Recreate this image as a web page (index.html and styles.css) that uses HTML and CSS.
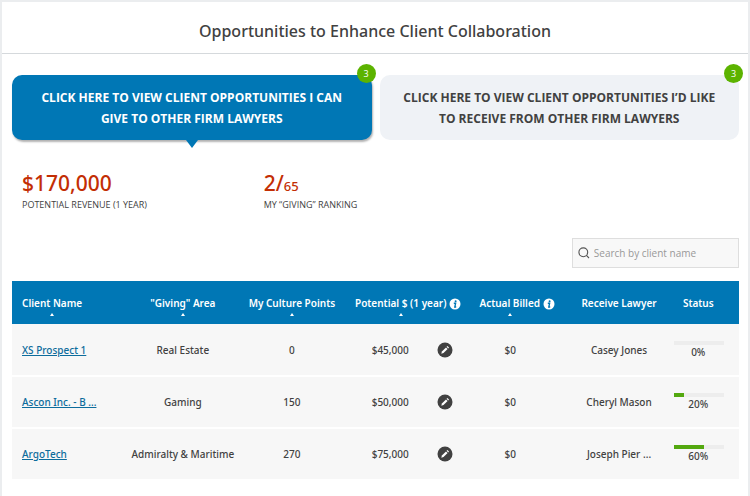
FILE: index.html
```html
<!DOCTYPE html>
<html lang="en">
<head>
    <meta charset="UTF-8">
    <meta name="viewport" content="width=device-width, initial-scale=1.0">
    <title>Client Collaboration</title>
    <link rel="stylesheet" href="styles.css">
</head>
<body>
    <!--shared icons-->
    <svg class="icon-defs" aria-hidden="true">
        <symbol id="info" viewBox="0 0 12 12">
            <circle cx="6" cy="6" r="5.5" fill="#fff"/>
            <circle cx="6.6" cy="3.2" r="1" fill="#0077b5"/>
            <path d="M4.8 5.3H6.6L5.8 9H7.2" fill="none" stroke="#0077b5" stroke-width="1.4"/>
        </symbol>
        <symbol id="edit" viewBox="0 0 16 16">
            <circle cx="8" cy="8" r="7.5" fill="#414141"/>
            <path d="M4.3 11.7L4.9 9.5L9 5.4L10.6 7L6.5 11.1Z" fill="#fff"/>
            <path d="M9.6 4.8L10.4 4L12 5.6L11.2 6.4Z" fill="#fff"/>
        </symbol>
    </svg>

    <main class="card">
        <h1>Opportunities to Enhance Client Collaboration</h1>
        <div class="content">
            <div class="tabs">
                <button type="button" class="tab active">Click here to view client opportunities I can give to other firm lawyers<span class="badge">3</span></button>
                <button type="button" class="tab">Click here to view client opportunities I’d like to receive from other firm lawyers<span class="badge">3</span></button>
            </div>

            <div class="stats">
                <div class="stat">
                    <div class="stat-value">$170,000</div>
                    <div class="stat-label">Potential revenue (1 year)</div>
                </div>
                <div class="stat">
                    <div class="stat-value">2/<small>65</small></div>
                    <div class="stat-label">My “giving” ranking</div>
                </div>
            </div>

            <label class="search">
                <svg viewBox="0 0 12 12" width="12" height="12" aria-hidden="true">
                    <circle cx="5.3" cy="5.3" r="4.4" fill="none" stroke="#555" stroke-width="1.1"/>
                    <path d="M8.4 8.4L11 11" stroke="#555" stroke-width="1.1"/>
                </svg>
                <input type="text" placeholder="Search by client name" aria-label="Search by client name">
            </label>

            <table class="clients">
                <thead>
                    <tr>
                        <th class="col-client"><span class="sort">Client Name</span></th>
                        <th class="col-area"><span class="sort">"Giving" Area</span></th>
                        <th class="col-points"><span class="sort">My Culture Points</span></th>
                        <th class="col-potential"><span class="sort">Potential $ (1 year)</span><svg class="info"><use href="#info"/></svg></th>
                        <th class="col-billed"><span class="sort">Actual Billed</span><svg class="info"><use href="#info"/></svg></th>
                        <th class="col-lawyer">Receive Lawyer</th>
                        <th class="col-status">Status</th>
                    </tr>
                </thead>
                <tbody>
                    <tr>
                        <td class="col-client"><a href="#">XS Prospect 1</a></td>
                        <td>Real Estate</td>
                        <td>0</td>
                        <td><div class="potential">$45,000<button type="button" class="edit" aria-label="Edit"><svg><use href="#edit"/></svg></button></div></td>
                        <td class="billed">$0</td>
                        <td>Casey Jones</td>
                        <td class="col-status"><div class="bar"><div class="fill" style="width: 0%"></div></div>0%</td>
                    </tr>
                    <tr>
                        <td class="col-client"><a href="#">Ascon Inc. - B ...</a></td>
                        <td>Gaming</td>
                        <td>150</td>
                        <td><div class="potential">$50,000<button type="button" class="edit" aria-label="Edit"><svg><use href="#edit"/></svg></button></div></td>
                        <td class="billed">$0</td>
                        <td>Cheryl Mason</td>
                        <td class="col-status"><div class="bar"><div class="fill" style="width: 20%"></div></div>20%</td>
                    </tr>
                    <tr>
                        <td class="col-client"><a href="#">ArgoTech</a></td>
                        <td>Admiralty &amp; Maritime</td>
                        <td>270</td>
                        <td><div class="potential">$75,000<button type="button" class="edit" aria-label="Edit"><svg><use href="#edit"/></svg></button></div></td>
                        <td class="billed">$0</td>
                        <td>Joseph Pier ...</td>
                        <td class="col-status"><div class="bar"><div class="fill" style="width: 60%"></div></div>60%</td>
                    </tr>
                </tbody>
            </table>
        </div>
    </main>
</body>
</html>
```
FILE: styles.css
```css
* {
    box-sizing: border-box;
}
body {
    margin: 0;
    padding: 2px;
    background-color: #ebedef;
    color: #414141;
    font-family: "Noto Sans", "Open Sans", sans-serif;
    font-size: 10px;
    font-weight: 500;
}
button, input {
    font: inherit;
    color: inherit;
}
.icon-defs {
    display: none;
}
.card {
    background-color: #fff;
}
h1 {
    margin: 0;
    padding: 17px 0 10px;
    border-bottom: 1px solid #d5d9dc;
    font-size: 16px;
    font-weight: 500;
    line-height: 24px;
    text-align: center;
}
.content {
    padding: 21px 9px 15px 10px;
}

/* tabs */
.tabs {
    display: grid;
    grid-template-columns: 1fr 1fr;
    gap: 8px;
}
.tab {
    position: relative;
    padding: 12px 20px 11px;
    border: none;
    border-radius: 10px;
    background-color: #eff2f6;
    font-family: "Open Sans", sans-serif;
    font-size: 12px;
    font-weight: 700;
    line-height: 21px;
    text-transform: uppercase;
    cursor: pointer;
}
.tab.active {
    background-color: #0077b5;
    box-shadow: 1px 2px 2px rgba(0, 0, 0, 0.3);
    color: #fff;
}
.tab.active::after {
    content: "";
    position: absolute;
    top: 100%;
    left: 50%;
    margin-left: -6px;
    border: 6px solid transparent;
    border-top: 8px solid #0077b5;
    border-bottom: 0;
}
.badge {
    position: absolute;
    top: -11px;
    right: -4px;
    width: 19px;
    height: 19px;
    border-radius: 50%;
    background-color: #5cb300;
    color: #fff;
    font-size: 9px;
    font-weight: 500;
    line-height: 19px;
}

/* numbers above the table */
.stats {
    display: grid;
    grid-template-columns: 1fr 2fr;
    gap: 4px;
    padding: 29px 0 0 10px;
}
.stat-value {
    height: 28px;
    color: #c32e04;
    font-size: 21px;
    line-height: 28px;
}
.stat-value small {
    font-size: 13px;
}
.stat-label {
    font-family: "Open Sans", sans-serif;
    font-size: 9px;
    line-height: 16px;
    text-transform: uppercase;
}

.search {
    display: flex;
    align-items: center;
    gap: 4px;
    width: 23%;
    height: 30px;
    margin: 25px 0 13px auto;
    padding: 0 5px;
    border: 1px solid #dedede;
    background-color: #f8f8f8;
}
.search svg {
    flex: none;
}
.search input {
    width: 100%;
    padding: 0;
    border: none;
    outline: none;
    background: none;
    font-family: "Open Sans", sans-serif;
    font-weight: 400;
}
.search input::placeholder {
    color: #999;
}

/* clients table */
.clients {
    width: 100%;
    table-layout: fixed;
    border-collapse: collapse;
    text-align: center;
    white-space: nowrap;
}
th {
    height: 43px;
    padding: 0;
    background-color: #0077b5;
    color: #fff;
    font-weight: 600;
}
td {
    height: 52px;
    padding: 0;
    border-bottom: 2px solid #fff;
    background-color: #f7f7f7;
}
.col-client {
    width: 16%;
    padding-left: 10px;
    text-align: left;
}
.col-area {
    width: 15%;
}
.col-points {
    width: 15%;
}
.col-potential {
    width: 17%;
}
.col-billed {
    width: 13%;
}
.col-lawyer {
    width: 15%;
}
.col-status {
    width: 9%;
    padding-right: 16px;
}
.sort {
    position: relative;
}
.sort::after {
    content: "";
    position: absolute;
    top: 100%;
    left: 50%;
    margin: 3px 0 0 -2px;
    border: 2px solid transparent;
    border-top: 0;
    border-bottom: 3px solid #fff;
}
.info {
    width: 12px;
    height: 12px;
    margin-left: 3px;
    vertical-align: -3px;
}
td a {
    color: #0d6c9c;
}
.potential {
    display: flex;
    align-items: center;
    justify-content: center;
    gap: 28px;
    padding-left: 8px;
}
.edit {
    display: flex;
    padding: 0;
    border: none;
    background: none;
    cursor: pointer;
}
.edit svg {
    width: 16px;
    height: 16px;
}
.billed {
    padding-right: 14px;
}
.bar {
    width: 50px;
    height: 4px;
    margin: 0 auto;
    background-color: #ededed;
}
.fill {
    height: 100%;
    background-color: #53a80f;
}
```
